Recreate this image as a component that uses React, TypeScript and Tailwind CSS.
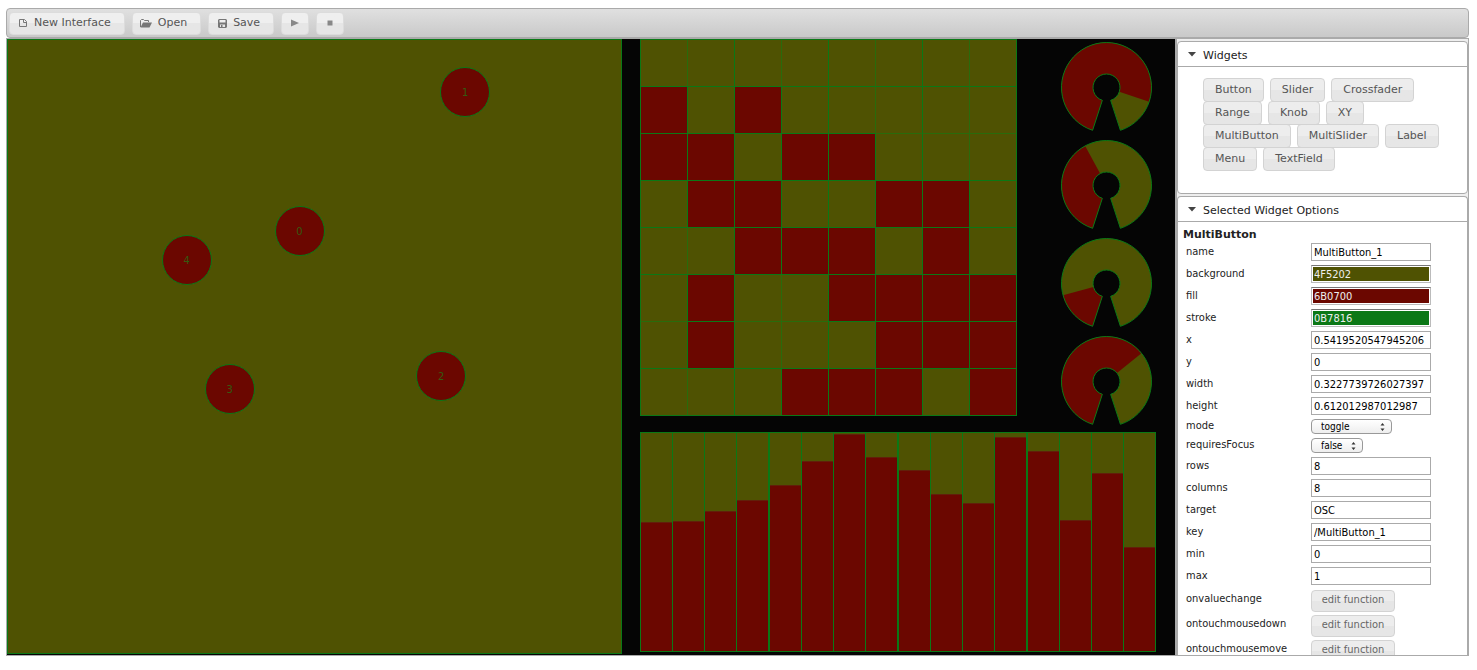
import React from "react";

const OLIVE = "bg-[#4f5202]";
const RED = "bg-[#6b0700]";

const touches = [
  { id: 0, x: 292, y: 191 },
  { id: 1, x: 458, y: 52 },
  { id: 2, x: 434, y: 336 },
  { id: 3, x: 222, y: 349 },
  { id: 4, x: 179, y: 220 },
];

const pads = [
  "........",
  "#.#.....",
  "##.##...",
  ".##..##.",
  "..###.#.",
  ".#..####",
  ".#...###",
  "...###.#",
];

const sliders = [
  [129, 130, 140, 151],
  [166, 190, 217, 194],
  [181, 157, 148, 214],
  [200, 131, 178, 104],
];

const knobs = [18.5, 241.7, 165, 321];

function isOn(r: number, c: number) {
  return r >= 0 && c >= 0 && pads[r][c] === "#";
}

function padBorder(r: number, c: number) {
  const leftSoft = c % 2 === 1 && !isOn(r, c) && !isOn(r, c - 1);
  const topSoft = (r === 2 || r === 6) && !isOn(r, c) && !isOn(r - 1, c);
  return `${leftSoft ? "border-l-[#296b0c]" : "border-l-[#0b7816]"} ${topSoft ? "border-t-[#296b0c]" : "border-t-[#0b7816]"}`;
}

function XYPad() {
  return (
    <div className={`relative mb-px min-w-0 flex-1 overflow-hidden border border-[#0b7816] ${OLIVE}`}>
      {touches.map((t) => (
        <div
          key={t.id}
          className={`absolute flex size-[50px] -translate-x-1/2 -translate-y-1/2 items-center justify-center rounded-full border border-[#0b7816] text-[10px] text-[#345a10] ${RED}`}
          style={{ left: `${(t.x / 614) * 100}%`, top: `${(t.y / 613) * 100}%` }}
        >
          {t.id}
        </div>
      ))}
    </div>
  );
}

function MultiButton() {
  return (
    <div className="grid w-[377px] grid-cols-8 border-r border-b border-[#0b7816]">
      {pads.flatMap((row, r) =>
        row.split("").map((v, c) => (
          <div key={`${r}-${c}`} className={`h-[47px] border-t border-l ${padBorder(r, c)} ${v === "#" ? RED : OLIVE}`} />
        ))
      )}
    </div>
  );
}

function point(radius: number, deg: number) {
  const a = (deg * Math.PI) / 180;
  return `${(45.5 + radius * Math.cos(a)).toFixed(2)} ${(45.5 + radius * Math.sin(a)).toFixed(2)}`;
}

function sector(from: number, to: number) {
  const sweep = to - from;
  const large = sweep > 180 ? 1 : 0;
  return `M${point(45, from)} A45 45 0 ${large} 1 ${point(45, to)} L${point(13.5, to)} A13.5 13.5 0 ${large} 0 ${point(13.5, from)} Z`;
}

function Knob({ angle }: { angle: number }) {
  const end = angle < 108 ? angle + 360 : angle;
  return (
    <svg width="91" height="98" viewBox="0 0 91 98" className="block">
      <path d={sector(108, 432)} fill="#4f5202" />
      <path d={sector(108, end)} fill="#6b0700" />
      <path d={sector(108, 432)} fill="none" stroke="#0b7816" />
    </svg>
  );
}

function MultiSlider() {
  return (
    <div className="flex h-[220px] border-y border-[#0b7816]">
      {sliders.map((group, g) => (
        <div key={g} className="flex flex-1 border-r border-[#0b7816]">
          {group.map((h, i) => (
            <div key={i} className={`flex flex-1 items-end border-l border-[#0b7816] ${OLIVE}`}>
              <div className={`w-full border-t border-[#61200a] ${RED}`} style={{ height: `${(h / 218) * 100}%` }} />
            </div>
          ))}
        </div>
      ))}
    </div>
  );
}

function ToolButton({ label, title, children }: { label?: string; title: string; children: React.ReactNode }) {
  return (
    <button
      aria-label={title}
      className={`flex h-[23px] items-center gap-[6px] rounded-[4px] border border-[#dcdcdc] bg-linear-to-b from-[#efefef] from-50% to-[#e6e6e6] to-50% pl-[9px] text-[11px] text-[#555] ${
        label ? "pr-[13px]" : "pr-[9px]"
      }`}
    >
      {children}
      {label}
    </button>
  );
}

function Toolbar() {
  return (
    <header className="flex h-[30px] shrink-0 items-center gap-[7px] rounded-[4px] border border-[#aaa] bg-linear-to-b from-[#e0e0e0] to-[#c9c9c9] px-[2px]">
      <ToolButton label="New Interface" title="New Interface">
        <svg width="9" height="10" viewBox="0 0 9 10" fill="none" stroke="#777">
          <path d="M.5 1.500H5.500L7.500 3.500V8.500H.5Z M4.500 1.500V4.500H7.500" />
        </svg>
      </ToolButton>
      <ToolButton label="Open" title="Open">
        <svg width="12" height="9" viewBox="0 0 12 9" className="-ml-[2px]">
          <path d="M.5 8V1.5L1.5.5H3.5L4.5 1.5H8.5V3" fill="none" stroke="#777" />
          <path d="M3 3.5H12L9.5 8.5H.5Z" fill="#777" />
        </svg>
      </ToolButton>
      <ToolButton label="Save" title="Save">
        <svg width="9" height="9" viewBox="0 0 9 9">
          <path fillRule="evenodd" d="M1 0H8L9 1V8L8 9H1L0 8V1Z M1.5 1V3.5H7.5V1Z M2 5.5V8H7V5.5Z" fill="#777" />
          <path d="M3 6H4.5V8H3Z" fill="#777" />
        </svg>
      </ToolButton>
      <ToolButton title="Play">
        <svg width="8" height="8" viewBox="0 0 8 8">
          <path d="M0 .5L8 4L0 7.5Z" fill="#888" />
        </svg>
      </ToolButton>
      <ToolButton title="Stop">
        <svg width="8" height="8" viewBox="0 0 8 8">
          <path d="M1.500 1.500H6.500V6.500H1.500Z" fill="#888" />
        </svg>
      </ToolButton>
    </header>
  );
}

function SectionTitle({ children }: { children: string }) {
  return (
    <h2 className="flex h-[25px] items-center gap-[7px] border-b border-[#aaa] pt-[4px] pl-[10px] text-[11px] text-[#222]">
      <svg width="8" height="5" viewBox="0 0 8 5" className="-mt-[3px]">
        <path d="M0 0H8L4 4.500Z" fill="#444" />
      </svg>
      {children}
    </h2>
  );
}

const widgetRows = [
  ["Button", "Slider", "Crossfader"],
  ["Range", "Knob", "XY"],
  ["MultiButton", "MultiSlider", "Label"],
  ["Menu", "TextField"],
];

type Field = { label: string; value: string; tone?: string };

const fieldsBefore: Field[] = [
  { label: "name", value: "MultiButton_1" },
  { label: "background", value: "4F5202", tone: "bg-[#4f5202]" },
  { label: "fill", value: "6B0700", tone: "bg-[#6b0700]" },
  { label: "stroke", value: "0B7816", tone: "bg-[#0b7816]" },
  { label: "x", value: "0.5419520547945206" },
  { label: "y", value: "0" },
  { label: "width", value: "0.3227739726027397" },
  { label: "height", value: "0.612012987012987" },
];

const fieldsAfter: Field[] = [
  { label: "rows", value: "8" },
  { label: "columns", value: "8" },
  { label: "target", value: "OSC" },
  { label: "key", value: "/MultiButton_1" },
  { label: "min", value: "0" },
  { label: "max", value: "1" },
];

function TextRow({ label, value, tone }: Field) {
  return (
    <div className="flex h-[22px] items-center">
      <label htmlFor={label} className="w-[125px]">
        {label}
      </label>
      <input
        id={label}
        defaultValue={value}
        className={`h-[18px] w-[120px] border pl-[2px] text-[11px] outline-none ${
          tone ? `border-[#bbb] border-t-[#777] text-[#eee] ring-1 ring-white ring-inset ${tone}` : "border-[#aaa] bg-white text-black"
        }`}
      />
    </div>
  );
}

function SelectRow({ label, value, width }: { label: string; value: string; width: string }) {
  return (
    <div className="flex h-[19px] items-center">
      <label htmlFor={label} className="w-[125px]">
        {label}
      </label>
      <div className={`relative ${width}`}>
        <select
          id={label}
          className="block h-[15px] w-full appearance-none rounded-[4px] border border-[#999] bg-linear-to-b from-white to-[#eee] pl-[9px] text-[10px] leading-[12px] text-black outline-none"
        >
          <option>{value}</option>
        </select>
        <svg width="5" height="8" viewBox="0 0 5 8" className="pointer-events-none absolute top-[4px] right-[7px]">
          <path d="M2.500 0L4.500 2.500H.5Z M2.500 8L4.500 5.500H.5Z" fill="#333" />
        </svg>
      </div>
    </div>
  );
}

function ActionRow({ label }: { label: string }) {
  return (
    <div className="flex h-[25px] items-center">
      <span id={label} className="w-[125px]">
        {label}
      </span>
      <button
        aria-describedby={label}
        className="mt-[2px] h-[22px] w-[84px] rounded-[4px] border border-[#d3d3d3] bg-linear-to-b from-[#ededed] from-50% to-[#e6e6e6] to-50% text-[11px] text-[#666]"
      >
        edit function
      </button>
    </div>
  );
}

function Sidebar() {
  return (
    <aside className="flex w-[294px] shrink-0 flex-col overflow-hidden border-x-2 border-r-1 border-[#aaa] bg-[#eee] pt-[2px]">
      <section className="h-[153px] shrink-0 rounded-[4px] border border-[#aaa] bg-white">
        <SectionTitle>Widgets</SectionTitle>
        <div className="pt-[11px] pl-[25px]">
          {widgetRows.map((row) => (
            <div key={row[0]} className="flex h-[23px] gap-[6px]">
              {row.map((name) => (
                <button
                  key={name}
                  className="h-[24px] shrink-0 rounded-[4px] border border-[#d3d3d3] bg-linear-to-b from-[#ededed] from-50% to-[#e6e6e6] to-50% px-[11px] text-[11px] text-[#555]"
                >
                  {name}
                </button>
              ))}
            </div>
          ))}
        </div>
      </section>
      <section className="mt-[2px] min-h-0 flex-1 overflow-hidden rounded-t-[4px] border border-b-0 border-[#aaa] bg-white">
        <SectionTitle>Selected Widget Options</SectionTitle>
        <h3 className="pt-[6px] pl-[5px] text-[11px] leading-[13px] font-bold text-[#222]">MultiButton</h3>
        <div className="pl-[8px] font-['DejaVu_Sans_Condensed','DejaVu_Sans',sans-serif] text-[11px] text-[#222]">
          {fieldsBefore.map((f) => (
            <TextRow key={f.label} {...f} />
          ))}
          <SelectRow label="mode" value="toggle" width="w-[81px]" />
          <SelectRow label="requiresFocus" value="false" width="w-[52px]" />
          {fieldsAfter.map((f) => (
            <TextRow key={f.label} {...f} />
          ))}
          <ActionRow label="onvaluechange" />
          <ActionRow label="ontouchmousedown" />
          <ActionRow label="ontouchmousemove" />
        </div>
      </section>
    </aside>
  );
}

export default function App() {
  return (
    <div className="flex h-screen flex-col bg-white px-[6px] pt-[8px] pr-[8px] pb-[14px] font-['DejaVu_Sans',sans-serif]">
      <Toolbar />
      <main className="flex min-h-0 flex-1 border border-r-0 border-[#aaa]">
        <div className="flex min-w-0 flex-1 gap-[18px] overflow-hidden bg-[#050505] pr-[19px]">
          <XYPad />
          <div className="flex w-[516px] shrink-0 flex-col gap-[16px]">
            <div className="flex h-[377px] gap-[44px]">
              <MultiButton />
              <div className="pt-[3px]">
                {knobs.map((angle) => (
                  <Knob key={angle} angle={angle} />
                ))}
              </div>
            </div>
            <MultiSlider />
          </div>
        </div>
        <Sidebar />
      </main>
    </div>
  );
}
